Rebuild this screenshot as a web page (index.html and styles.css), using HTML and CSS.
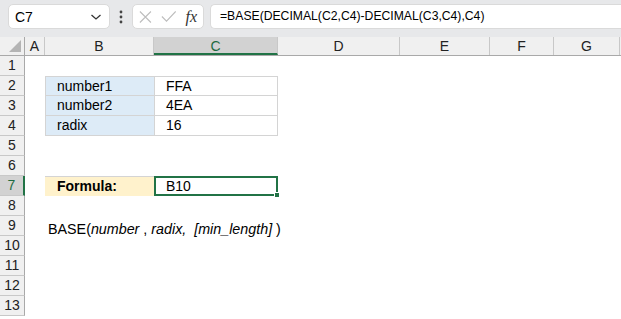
FILE: index.html
```html
<!DOCTYPE html>
<html lang="en">
<head>
    <meta charset="UTF-8">
    <title>BASE example</title>
    <link rel="stylesheet" href="styles.css">
</head>
<body>

    <div class="toolbar">
        <div class="namebox">
            <span>C7</span>
            <svg width="12" height="8" viewBox="0 0 12 8"><path d="M1.5 2 L6 6 L10.5 2" fill="none" stroke="#333" stroke-width="1.3"/></svg>
        </div>
        <svg class="dots" width="4" height="14" viewBox="0 0 4 14"><circle cx="2" cy="2" r="1.4" fill="#444"/><circle cx="2" cy="7" r="1.4" fill="#444"/><circle cx="2" cy="12" r="1.4" fill="#444"/></svg>
        <div class="fxbox">
            <svg width="14" height="14" viewBox="0 0 14 14"><path d="M1 1 L13 13 M13 1 L1 13" stroke="#bdbdbd" stroke-width="1.2"/></svg>
            <svg width="17" height="13" viewBox="0 0 17 13"><path d="M1 6.5 L6 11.5 L16 1" fill="none" stroke="#bdbdbd" stroke-width="1.2"/></svg>
            <span class="fx">fx</span>
        </div>
        <div class="formula">=BASE(DECIMAL(C2,C4)-DECIMAL(C3,C4),C4)</div>
    </div>

    <div class="sheet">
        <div class="row head">
            <div class="rh corner"><svg width="12" height="12" viewBox="0 0 12 12"><path d="M12 0 L12 12 L0 12 Z" fill="#b4b4b4"/></svg></div>
            <div class="c a">A</div><div class="c b">B</div><div class="c cc sel">C</div><div class="c d">D</div><div class="c e">E</div><div class="c f">F</div><div class="c g">G</div>
        </div>
        <div class="row"><div class="rh">1</div></div>
        <div class="row">
            <div class="rh">2</div><div class="c a"></div>
            <div class="c b label top">number1</div><div class="c cc val top">FFA</div>
        </div>
        <div class="row">
            <div class="rh">3</div><div class="c a"></div>
            <div class="c b label">number2</div><div class="c cc val">4EA</div>
        </div>
        <div class="row">
            <div class="rh">4</div><div class="c a"></div>
            <div class="c b label">radix</div><div class="c cc val">16</div>
        </div>
        <div class="row"><div class="rh">5</div></div>
        <div class="row"><div class="rh">6</div></div>
        <div class="row">
            <div class="rh active">7</div><div class="c a"></div>
            <div class="c b formula-label">Formula:</div>
            <div class="c cc result">B10<span class="handle"></span></div>
        </div>
        <div class="row"><div class="rh">8</div></div>
        <div class="row">
            <div class="rh">9</div><div class="c a"></div>
            <div class="c b syntax">BASE(<i>number</i> , <i>radix,</i>&nbsp; <i>[min_length]</i> )</div>
        </div>
        <div class="row"><div class="rh">10</div></div>
        <div class="row"><div class="rh">11</div></div>
        <div class="row"><div class="rh">12</div></div>
        <div class="row"><div class="rh">13</div></div>
    </div>

</body>
</html>
```

FILE: styles.css
```css
* {
    box-sizing: border-box;
}

body {
    margin: 0;
    font-family: "Liberation Sans", Arial, sans-serif;
    background: #fff;
    color: #000;
    overflow: hidden;
}

/* formula bar */
.toolbar {
    height: 37px;
    background: #e7e8ea;
    display: flex;
    align-items: flex-start;
    padding: 4px 0 0 8px;
}

.namebox {
    width: 102px;
    height: 25px;
    background: #fff;
    border: 1px solid #dadada;
    border-radius: 5px;
    display: flex;
    align-items: center;
    justify-content: space-between;
    padding: 0 7px 0 6px;
    font-size: 14px;
}

.dots {
    margin: 6px 9px 0 9px;
}

.fxbox {
    width: 72px;
    height: 25px;
    background: #fff;
    border: 1px solid #dadada;
    border-radius: 5px;
    display: flex;
    align-items: center;
    gap: 9px;
    padding: 0 6px 0 6px;
}

.fx {
    font-family: "Liberation Serif", serif;
    font-style: italic;
    font-size: 16px;
    color: #333;
}

.formula {
    flex: 1;
    height: 25px;
    margin-left: 6px;
    background: #fff;
    border: 1px solid #dadada;
    border-right: none;
    border-radius: 5px 0 0 5px;
    font-size: 12.2px;
    padding: 4px 0 0 9px;
}

/* grid */
.row {
    display: flex;
    height: 20px;
}

.row.head {
    height: 19px;
    background: #f0f0f0;
    border-bottom: 1px solid #a9a9a9;
}

.rh {
    width: 25px;
    flex: none;
    background: #f0f0f0;
    border-right: 1px solid #a9a9a9;
    border-bottom: 1px solid #c8c8c8;
    font-size: 14px;
    text-align: center;
    line-height: 19px;
    color: #222;
}

.rh.corner {
    border-bottom: none;
    display: flex;
    align-items: flex-end;
    justify-content: flex-end;
    padding: 0 3px 3px 0;
}

.rh.active {
    background: #d2d2d2;
    border-right: 2px solid #217346;
    color: #1f6b41;
}

.c {
    flex: none;
    height: 20px;
    font-size: 14px;
    line-height: 19px;
    white-space: nowrap;
}

.head .c {
    height: 18px;
    text-align: center;
    border-right: 1px solid #c8c8c8;
    color: #222;
}

.head .c.sel {
    background: #d2d2d2;
    border-bottom: 2px solid #217346;
    color: #1f6b41;
}

.a { width: 20px; }
.b { width: 109px; }
.cc { width: 124px; }
.d { width: 122px; }
.e { width: 90px; }
.f { width: 64px; }
.g { width: 66px; }

.label {
    background: #ddebf7;
    border: 1px solid #d4d4d4;
    border-top: none;
    border-right: none;
    padding-left: 11px;
}

.val {
    border: 1px solid #d4d4d4;
    border-top: none;
    padding-left: 11px;
}

.label.top,
.val.top {
    border-top: 1px solid #d4d4d4;
}

.formula-label {
    background: #fff2cc;
    border-top: 1px solid #d4d4d4;
    font-weight: bold;
    padding-left: 12px;
}

.result {
    position: relative;
    border: 2px solid #217346;
    padding-left: 10px;
    line-height: 16px;
}

.handle {
    position: absolute;
    right: -4px;
    bottom: -4px;
    width: 6px;
    height: 6px;
    background: #217346;
    border: 1px solid #fff;
}

.syntax {
    padding-left: 3px;
    font-size: 14.3px;
    line-height: 26px;
    overflow: visible;
}
```
